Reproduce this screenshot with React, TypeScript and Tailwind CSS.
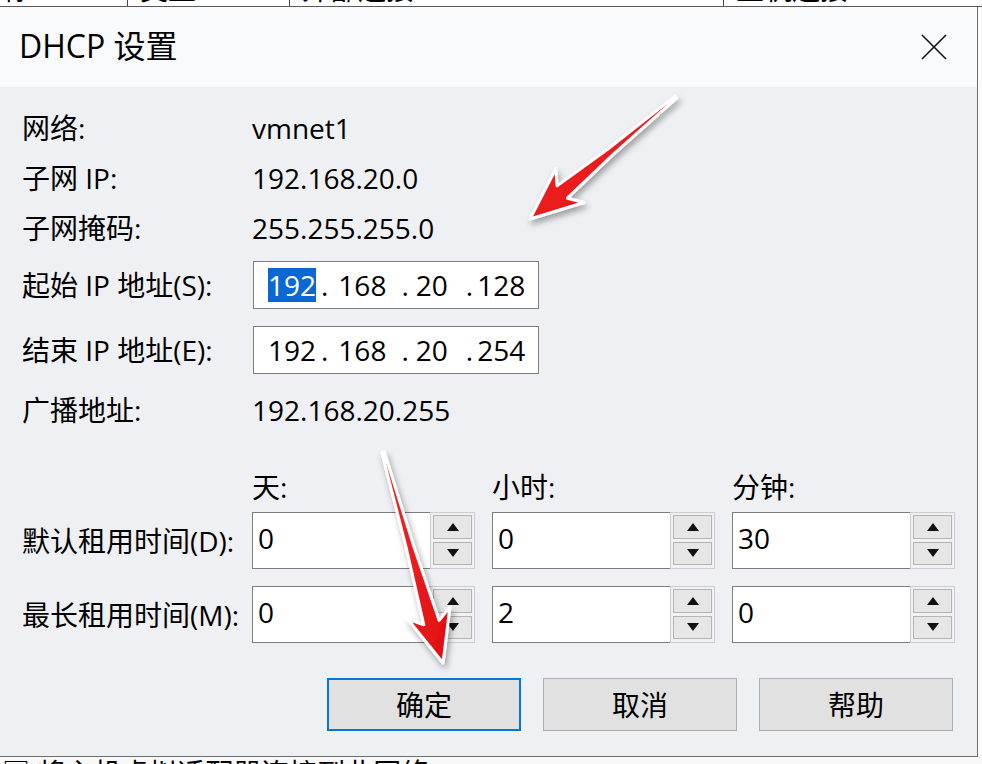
import React from "react"

const font = "font-['Open_Sans','Noto_Sans_CJK_SC',sans-serif]"

function arrowPoints(tx: number, ty: number, px: number, py: number) {
    const dx = px - tx
    const dy = py - ty
    const L = Math.hypot(dx, dy)
    const ux = dx / L
    const uy = dy / L
    const nx = -uy
    const ny = ux
    const pt = (s: number, w: number) =>
        `${(tx + ux * s + nx * w).toFixed(1)},${(ty + uy * s + ny * w).toFixed(1)}`
    return [
        pt(0, -1.2),
        pt(L * 0.45, -3.8),
        pt(L - 42, -8),
        pt(L - 52, -22),
        pt(L, 0),
        pt(L - 52, 22),
        pt(L - 42, 8),
        pt(L * 0.45, 3.8),
        pt(0, 1.2),
    ].join(" ")
}

function Arrows() {
    return (
        <svg
            className="absolute inset-0 pointer-events-none"
            width="982"
            height="764"
            viewBox="0 0 982 764"
        >
            <defs>
                <filter id="shadow" x="-20%" y="-20%" width="140%" height="140%">
                    <feDropShadow dx="2" dy="4" stdDeviation="3" floodColor="#000" floodOpacity="0.35" />
                </filter>
                <linearGradient id="red" x1="0" y1="0" x2="1" y2="1">
                    <stop offset="0" stopColor="#f52a2a" />
                    <stop offset="1" stopColor="#e00d12" />
                </linearGradient>
            </defs>
            <polygon
                points={arrowPoints(676, 97, 530, 219)}
                fill="url(#red)"
                stroke="#fff"
                strokeWidth="3"
                strokeLinejoin="round"
                filter="url(#shadow)"
            />
            <polygon
                points={arrowPoints(383, 452, 443, 663)}
                fill="url(#red)"
                stroke="#fff"
                strokeWidth="3"
                strokeLinejoin="round"
                filter="url(#shadow)"
            />
        </svg>
    )
}

function Tri({ down }: { down?: boolean }) {
    return (
        <svg width="12" height="8" viewBox="0 0 12 8">
            {down ? (
                <polygon points="0,0 12,0 6,8" fill="#111" />
            ) : (
                <polygon points="0,8 12,8 6,0" fill="#111" />
            )}
        </svg>
    )
}

function Spinner({ value }: { value: string }) {
    return (
        <div className="flex h-[57px] w-[223px]">
            <div className="flex-1 flex items-center bg-white border border-r-0 border-[#7d7d7d] pl-[5px] pb-[6px]">
                {value}
            </div>
            <div className="w-[45px] flex flex-col gap-[3px] px-[2px] pt-[2px] pb-[3px] border border-[#cdcdcd] bg-[#f1f1f1]">
                <div className="flex-1 flex items-center justify-center border border-[#b4b4b4] bg-[#e6e6e6]">
                    <Tri />
                </div>
                <div className="flex-1 flex items-center justify-center border border-[#b4b4b4] bg-[#e6e6e6]">
                    <Tri down />
                </div>
            </div>
        </div>
    )
}

function IpBox({ first, rest, selected }: { first: string; rest: string[]; selected?: boolean }) {
    return (
        <div className="ml-[1px] flex h-[48px] w-[286px] items-center border border-[#7d7d7d] bg-white pl-[14px]">
            <span
                className={
                    selected
                        ? "w-[48px] h-[34px] flex items-center justify-center bg-[#0a68d4] text-white"
                        : "w-[48px] h-[34px] flex items-center justify-center"
                }
            >
                {first}
            </span>
            <span className="ml-[5px]">.</span>
            <span className="ml-[10px]">{rest[0]}</span>
            <span className="ml-[15px]">.</span>
            <span className="ml-[7px]">{rest[1]}</span>
            <span className="ml-[18px]">.</span>
            <span className="ml-[4px]">{rest[2]}</span>
        </div>
    )
}

function InfoRow({ label, value, h }: { label: string; value: string; h: string }) {
    return (
        <div className={`flex items-center ${h}`}>
            <div className="w-[230px] shrink-0 whitespace-nowrap">{label}</div>
            <div>{value}</div>
        </div>
    )
}

export default function App() {
    return (
        <div className={`relative w-[982px] h-[764px] overflow-hidden bg-white text-[28px] text-black ${font}`}>
            <div className="h-[7px] overflow-hidden border-b border-[#5a5a5a]">
                <div className="-mt-[29px] flex h-[36px] leading-[36px]">
                    <div className="w-[128px] border-r border-[#444] pl-[2px]">称</div>
                    <div className="w-[162px] border-r border-[#444] pl-[12px]">类型</div>
                    <div className="w-[434px] border-r border-[#444] pl-[12px]">外部连接</div>
                    <div className="pl-[12px]">主机连接</div>
                </div>
            </div>

            <div className="flex">
                <div className="w-[978px] border-r border-b border-[#6e6e6e] flex flex-col">
                    <div className="h-[80px] bg-[#f9fafc] flex items-center justify-between pl-[19px] pr-[30px]">
                        <div className="text-[32px] pb-[2px]">DHCP 设置</div>
                        <svg width="26" height="26" viewBox="0 0 26 26">
                            <path d="M1 1 L25 25 M25 1 L1 25" stroke="#111" strokeWidth="1.6" />
                        </svg>
                    </div>

                    <div className="h-[669px] bg-[#eef0f3] flex flex-col pt-[16px] pl-[22px]">
                        <InfoRow label="网络:" value="vmnet1" h="h-[50px]" />
                        <InfoRow label="子网 IP:" value="192.168.20.0" h="h-[50px]" />
                        <InfoRow label="子网掩码:" value="255.255.255.0" h="h-[50px]" />
                        <div className="flex items-center h-[64px]">
                            <div className="w-[230px] shrink-0 whitespace-nowrap">起始 IP 地址(S):</div>
                            <IpBox first="192" rest={["168", "20", "128"]} selected />
                        </div>
                        <div className="flex items-center h-[66px]">
                            <div className="w-[230px] shrink-0 whitespace-nowrap">结束 IP 地址(E):</div>
                            <IpBox first="192" rest={["168", "20", "254"]} />
                        </div>
                        <InfoRow label="广播地址:" value="192.168.20.255" h="h-[54px]" />

                        <div className="mt-[25px] h-[50px] flex items-center">
                            <div className="w-[230px] shrink-0" />
                            <div className="flex gap-[17px]">
                                <div className="w-[223px]">天:</div>
                                <div className="w-[223px]">小时:</div>
                                <div className="w-[223px]">分钟:</div>
                            </div>
                        </div>

                        <div className="flex items-center h-[57px]">
                            <div className="w-[230px] shrink-0 whitespace-nowrap">默认租用时间(D):</div>
                            <div className="flex gap-[17px]">
                                <Spinner value="0" />
                                <Spinner value="0" />
                                <Spinner value="30" />
                            </div>
                        </div>
                        <div className="mt-[17px] flex items-center h-[57px]">
                            <div className="w-[230px] shrink-0 whitespace-nowrap">最长租用时间(M):</div>
                            <div className="flex gap-[17px]">
                                <Spinner value="0" />
                                <Spinner value="2" />
                                <Spinner value="0" />
                            </div>
                        </div>

                        <div className="mt-[35px] flex gap-[22px] pl-[305px]">
                            <button className="h-[53px] w-[194px] border-2 border-[#0078d7] bg-[#e1e1e1]">
                                确定
                            </button>
                            <button className="h-[53px] w-[194px] border border-[#adadad] bg-[#e1e1e1]">
                                取消
                            </button>
                            <button className="h-[53px] w-[194px] border border-[#adadad] bg-[#e1e1e1]">
                                帮助
                            </button>
                        </div>
                    </div>
                </div>
                <div className="flex-1 bg-[#fbfbfb]" />
            </div>

            <div className="h-[8px] overflow-hidden bg-[#f8f8f8]">
                <div className="-mt-[2px] leading-[36px] pl-[2px]">□ 将主机虚拟适配器连接到此网络(V)</div>
            </div>

            <Arrows />
        </div>
    )
}
